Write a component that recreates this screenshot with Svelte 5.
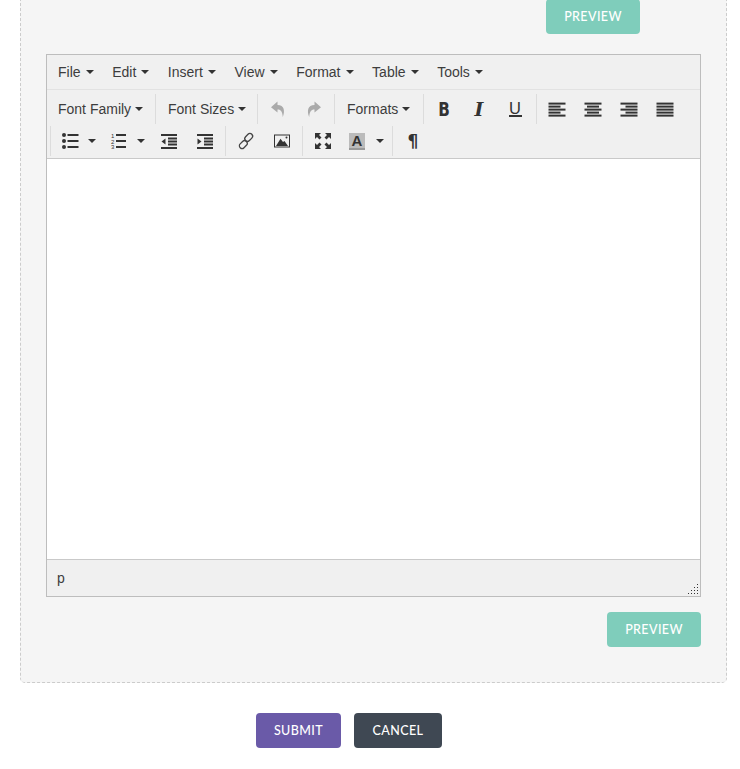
<script>
  const menus = ['File', 'Edit', 'Insert', 'View', 'Format', 'Table', 'Tools'];
  const dots = [];
  for (let r = 0; r < 4; r++) {
    for (let c = 3 - r; c < 4; c++) dots.push({ x: c * 3, y: r * 3 });
  }
</script>

{#snippet align(kind)}
  <svg class="ico" viewBox="0 0 18 18" aria-hidden="true">
    {#each [0, 1, 2, 3, 4] as i}
      {@const short = i % 2 === 1 && kind !== 'justify'}
      {@const w = short ? 12 : 17}
      {@const x = kind === 'right' ? 17.5 - w : kind === 'center' && short ? 3 : 0.5}
      <rect {x} y={2.6 + i * 3} width={w} height="2" fill="#333" />
    {/each}
  </svg>
{/snippet}

{#snippet indent(out)}
  <svg class="ico" viewBox="0 0 18 18" aria-hidden="true">
    <rect x="1" y="2" width="16" height="2" fill="#333" />
    <rect x="8" y="5.5" width="9" height="2" fill="#333" />
    <rect x="8" y="8.5" width="9" height="2" fill="#333" />
    <rect x="8" y="11.5" width="9" height="2" fill="#333" />
    <rect x="1" y="15" width="16" height="2" fill="#333" />
    {#if out}
      <path d="M5.5 6.5V12.5L1.5 9.5Z" fill="#333" />
    {:else}
      <path d="M1.5 6.5V12.5L5.5 9.5Z" fill="#333" />
    {/if}
  </svg>
{/snippet}

<div class="page">
  <section class="panel">
    <div class="top-action">
      <button class="btn preview">PREVIEW</button>
    </div>

    <div class="editor">
      <div class="menubar">
        {#each menus as m}
          <span class="menu">{m}<i class="caret"></i></span>
        {/each}
      </div>

      <div class="toolbar">
        <div class="group first">
          <span class="tool text wide-a">Font Family<i class="caret"></i></span>
        </div>
        <div class="group">
          <span class="tool text wide-b">Font Sizes<i class="caret"></i></span>
        </div>
        <div class="group">
          <span class="tool">
            <svg class="ico" viewBox="0 0 18 18" aria-hidden="true">
              <path d="M8.5 1.5 2 7.2 8.5 12.6V9.4C11.6 9.2 13.3 11 13.8 17 16.2 11 15.4 5 8.5 4.9Z" fill="#aaa" />
            </svg>
          </span>
          <span class="tool">
            <svg class="ico" viewBox="0 0 18 18" aria-hidden="true">
              <path d="M9.5 1.5 16 7.2 9.5 12.6V9.4C6.4 9.2 4.7 11 4.2 17 1.8 11 2.6 5 9.5 4.9Z" fill="#aaa" />
            </svg>
          </span>
        </div>
        <div class="group">
          <span class="tool text wide-c">Formats<i class="caret"></i></span>
        </div>
        <div class="group">
          <span class="tool"><b class="glyph bold">B</b></span>
          <span class="tool"><b class="glyph ital">I</b></span>
          <span class="tool"><span class="glyph under">U</span></span>
        </div>
        <div class="group">
          <span class="tool">{@render align('left')}</span>
          <span class="tool">{@render align('center')}</span>
          <span class="tool">{@render align('right')}</span>
          <span class="tool">{@render align('justify')}</span>
        </div>

        <div class="group second">
          <span class="tool split">
            <svg class="ico" viewBox="0 0 18 18" aria-hidden="true">
              <circle cx="3" cy="3" r="2" fill="#333" />
              <circle cx="3" cy="9" r="2" fill="#333" />
              <circle cx="3" cy="15" r="2" fill="#333" />
              <rect x="6.5" y="2" width="11" height="2" fill="#333" />
              <rect x="6.5" y="8" width="11" height="2" fill="#333" />
              <rect x="6.5" y="14" width="11" height="2" fill="#333" />
            </svg>
            <i class="caret dark"></i>
          </span>
          <span class="tool split">
            <svg class="ico" viewBox="0 0 18 18" aria-hidden="true">
              <text x="1" y="6" class="num">1</text>
              <text x="1" y="11.5" class="num">2</text>
              <text x="1" y="17" class="num">3</text>
              <rect x="6" y="2" width="10" height="2" fill="#333" />
              <rect x="6" y="8" width="10" height="2" fill="#333" />
              <rect x="6" y="14" width="10" height="2" fill="#333" />
            </svg>
            <i class="caret dark"></i>
          </span>
          <span class="tool">{@render indent(true)}</span>
          <span class="tool">{@render indent(false)}</span>
        </div>
        <div class="group">
          <span class="tool">
            <svg class="ico" viewBox="0 0 18 18" aria-hidden="true">
              <g fill="none" stroke="#444" stroke-width="1.3">
                <rect x="9" y="1" width="5.4" height="8.8" rx="2.7" transform="rotate(45 11.7 5.4)" />
                <rect x="3.6" y="8.2" width="5.4" height="8.8" rx="2.7" transform="rotate(45 6.3 12.6)" />
              </g>
            </svg>
          </span>
          <span class="tool">
            <svg class="ico" viewBox="0 0 18 18" aria-hidden="true">
              <rect x="1.5" y="3" width="15" height="12" fill="none" stroke="#333" />
              <path d="M3 14 7.5 6.8 10 10 11.5 9 15 14Z" fill="#333" />
              <circle cx="13.5" cy="5.5" r="1" fill="#333" />
            </svg>
          </span>
        </div>
        <div class="group">
          <span class="tool">
            <svg class="ico" viewBox="0 0 18 18" aria-hidden="true">
              <g fill="#333">
                <path d="M1 1H7L5 3 7.5 5.5 5.5 7.5 3 5 1 7Z" />
                <path d="M17 1H11L13 3 10.5 5.5 12.5 7.5 15 5 17 7Z" />
                <path d="M1 17H7L5 15 7.5 12.5 5.5 10.5 3 13 1 11Z" />
                <path d="M17 17H11L13 15 10.5 12.5 12.5 10.5 15 13 17 11Z" />
              </g>
            </svg>
          </span>
          <span class="tool split">
            <span class="forecolor">A</span>
            <i class="caret dark"></i>
          </span>
        </div>
        <div class="group">
          <span class="tool"><b class="glyph para">¶</b></span>
        </div>
      </div>

      <div class="content"></div>

      <div class="status">
        <span>p</span>
        <svg class="resize" width="10" height="10" viewBox="0 0 10 10" aria-hidden="true">
          {#each dots as d}
            <rect x={d.x} y={d.y} width="1" height="1" fill="#333" />
          {/each}
        </svg>
      </div>
    </div>

    <div class="bottom-action">
      <button class="btn preview">PREVIEW</button>
    </div>
  </section>

  <div class="actions">
    <button class="btn submit">SUBMIT</button>
    <button class="btn cancel">CANCEL</button>
  </div>
</div>

<style>
  :global(body) {
    margin: 0;
    background: #fff;
  }
  .page {
    width: 740px;
    height: 769px;
    overflow: hidden;
    font-family: "Liberation Sans", Arial, sans-serif;
    font-size: 14px;
    color: #3d3d3d;
  }
  .panel {
    box-sizing: border-box;
    width: 707px;
    margin: -42px 0 0 20px;
    padding: 40px 25px 35px;
    background: #f5f5f5;
    border: 1px dashed #ccc;
    border-radius: 5px;
  }
  .top-action {
    display: flex;
    justify-content: flex-end;
    padding-right: 61px;
    margin-bottom: 20px;
  }
  .bottom-action {
    display: flex;
    justify-content: flex-end;
    margin-top: 15px;
  }
  .btn {
    box-sizing: border-box;
    height: 35px;
    border: 0;
    border-radius: 4px;
    padding: 0;
    color: #fff;
    font-family: Lato, "Open Sans", sans-serif;
    font-size: 12.5px;
    font-weight: 500;
    letter-spacing: 0.4px;
  }
  .preview {
    width: 94px;
    background: #7fcdbb;
  }
  .submit {
    width: 85px;
    background: #6a5aa8;
  }
  .cancel {
    width: 88px;
    background: #3f4853;
  }
  .actions {
    display: flex;
    gap: 13px;
    margin-top: 30px;
    padding-left: 256px;
  }
  .editor {
    border: 1px solid #bdbdbd;
    background: #f0f0f0;
  }
  .menubar {
    display: flex;
    height: 34px;
    align-items: center;
    padding-left: 1.7px;
    border-bottom: 1px solid #e2e2e2;
  }
  .menu {
    display: flex;
    align-items: center;
    padding: 0 9.3px;
  }
  .caret {
    display: inline-block;
    width: 0;
    height: 0;
    margin-left: 5px;
    border-top: 4px solid #333;
    border-left: 4px solid transparent;
    border-right: 4px solid transparent;
  }
  .toolbar {
    display: flex;
    flex-wrap: wrap;
    row-gap: 2px;
    padding: 4px 0 2px;
    border-bottom: 1px solid #c9c9c9;
  }
  .group {
    display: flex;
    height: 30px;
    padding: 0 2px;
    border-left: 1px solid #dcdcdc;
  }
  .group.first {
    padding-left: 1px;
    border-left: 0;
  }
  .group.second {
    margin-left: 3px;
  }
  .tool {
    box-sizing: border-box;
    display: flex;
    align-items: center;
    justify-content: center;
    width: 36px;
    height: 30px;
  }
  .tool.text {
    justify-content: flex-start;
    padding-left: 10px;
  }
  .tool.text .caret {
    margin-left: 4px;
  }
  .wide-a {
    width: 105px;
  }
  .wide-b {
    width: 97px;
  }
  .wide-c {
    width: 84px;
  }
  .tool.split {
    width: 49px;
    justify-content: flex-start;
    padding-left: 8px;
  }
  .caret.dark {
    margin-left: 9px;
    border-top-color: #333;
  }
  .ico {
    display: block;
    width: 18px;
    height: 18px;
    flex: none;
  }
  .num {
    font-family: "Liberation Sans", sans-serif;
    font-size: 6px;
    fill: #333;
  }
  .glyph {
    display: block;
    width: 18px;
    text-align: center;
    line-height: 18px;
    color: #333;
  }
  .bold {
    font-family: "DejaVu Sans", sans-serif;
    font-size: 19px;
    font-weight: 700;
    transform: scaleX(0.8);
  }
  .ital {
    font-family: "DejaVu Serif", serif;
    font-size: 19px;
    font-style: italic;
    font-weight: 700;
    transform: translateX(-1px);
  }
  .under {
    font-family: "Liberation Sans", sans-serif;
    font-size: 16.5px;
    line-height: 14px;
    height: 14px;
    border-bottom: 2px solid #333;
    width: 13px;
    transform: translateX(-1px);
  }
  .para {
    font-family: "DejaVu Sans", sans-serif;
    font-size: 17px;
    font-weight: 700;
  }
  .forecolor {
    box-sizing: border-box;
    display: block;
    width: 16px;
    height: 17px;
    margin-right: 2px;
    background: #bbb;
    border-bottom: 2px solid #999;
    font-family: "Liberation Sans", sans-serif;
    font-size: 15px;
    font-weight: 700;
    line-height: 15px;
    text-align: center;
    color: #333;
  }
  .content {
    height: 400px;
    background: #fff;
    border-bottom: 1px solid #c9c9c9;
  }
  .status {
    position: relative;
    box-sizing: border-box;
    height: 36px;
    display: flex;
    align-items: center;
    padding-left: 10px;
  }
  .resize {
    position: absolute;
    right: 2px;
    bottom: 2px;
  }
</style>
